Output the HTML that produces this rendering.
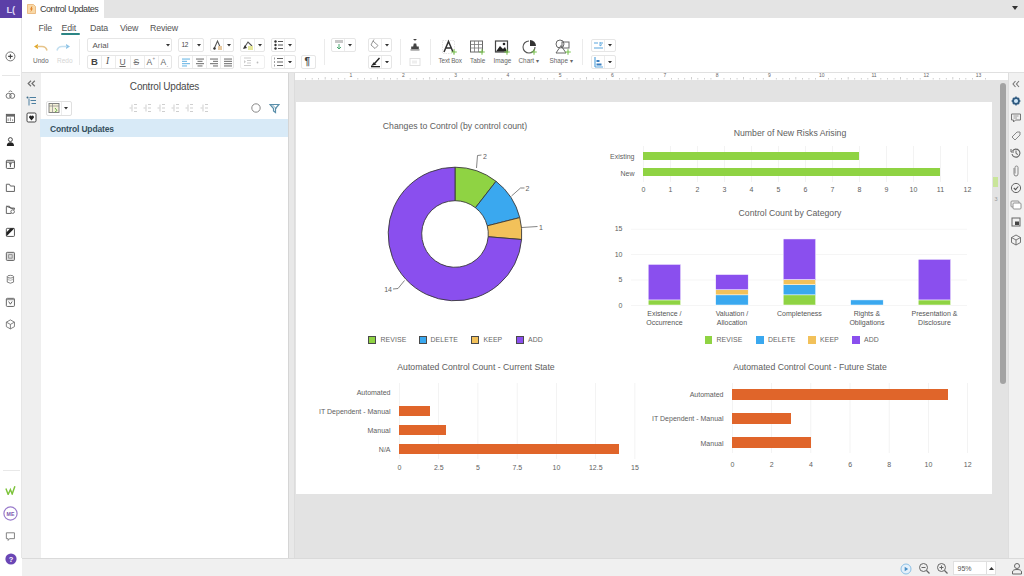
<!DOCTYPE html>
<html><head><meta charset="utf-8">
<style>
*{box-sizing:border-box;margin:0;padding:0}
html,body{width:1024px;height:576px;overflow:hidden;background:#fff;font-family:"Liberation Sans",sans-serif;color:#333}
.a{position:absolute}
.t{position:absolute;white-space:nowrap;line-height:1}
</style></head><body>
<div class="a" style="left:22px;top:0px;width:1002px;height:18px;background:#e4e4e4"></div>
<div class="a" style="left:22px;top:0px;width:82px;height:18px;background:#fff"></div>
<div class="a" style="left:0px;top:0px;width:22px;height:18px;background:#5b3fa7"></div>
<div class="t" style="left:6.5px;top:4.5px;font-size:9.5px;color:#ddd6f5;font-weight:bold;letter-spacing:-0.3px">L(</div>
<svg class="a" style="left:27px;top:4px;" width="9" height="10" viewBox="0 0 9 10"><path d="M0.5 0.5h6l2 2v7h-8z" fill="#f8d9a8" stroke="#e9b070" stroke-width="0.8"/><path d="M4.5 2.5l-1.5 3h1.2l-.8 3 2.5-4h-1.3l.9-2z" fill="#e07a20"/></svg>
<div class="t" style="left:40px;top:4.50px;font-size:9px;line-height:9px;color:#3a3a3a;letter-spacing:-0.45px">Control Updates</div>
<svg class="a" style="left:1012px;top:6px;" width="6" height="4" viewBox="0 0 6 4"><path d="M0 0H6L3 4Z" fill="#333"/></svg>
<div class="a" style="left:21px;top:18px;width:1px;height:540px;background:#e6e6e6"></div>
<div class="t" style="left:38.5px;top:23.90px;font-size:8.8px;line-height:8.8px;color:#555;letter-spacing:-0.15px">File</div>
<div class="t" style="left:61.5px;top:23.90px;font-size:8.8px;line-height:8.8px;color:#555;letter-spacing:-0.15px">Edit</div>
<div class="t" style="left:90px;top:23.90px;font-size:8.8px;line-height:8.8px;color:#555;letter-spacing:-0.15px">Data</div>
<div class="t" style="left:120px;top:23.90px;font-size:8.8px;line-height:8.8px;color:#555;letter-spacing:-0.15px">View</div>
<div class="t" style="left:150px;top:23.90px;font-size:8.8px;line-height:8.8px;color:#555;letter-spacing:-0.15px">Review</div>
<div class="a" style="left:61px;top:33px;width:19px;height:2px;background:#2b8585;border-radius:1px"></div>
<div class="a" style="left:22px;top:72px;width:1002px;height:1px;background:#e0e0e0"></div>
<svg class="a" style="left:33px;top:42px;" width="16" height="10" viewBox="0 0 16 10"><path d="M5 2 L1 4.5 L5 7 Z" fill="#e2a92a"/><path d="M4 4.5 H9 Q13 4.5 14 8.5" stroke="#e7c48a" stroke-width="1.6" fill="none"/></svg>
<svg class="a" style="left:56px;top:42px;" width="15" height="10" viewBox="0 0 15 10"><path d="M10 2 L14 4.5 L10 7 Z" fill="#8ec3e6"/><path d="M11 4.5 H6 Q2 4.5 1 8.5" stroke="#c3dff0" stroke-width="1.6" fill="none"/></svg>
<div class="t" style="left:33px;top:58.05px;font-size:6.5px;line-height:6.5px;color:#666;">Undo</div>
<div class="t" style="left:57px;top:58.05px;font-size:6.5px;line-height:6.5px;color:#d5d5d5;">Redo</div>
<div class="a" style="left:79px;top:39px;width:1px;height:26px;background:#ebebeb"></div>
<div class="a" style="left:87px;top:38px;width:85px;height:14px;border:1px solid #e6e6e6;border-radius:2px;background:#fff"></div>
<div class="t" style="left:92.5px;top:41.50px;font-size:8px;line-height:8px;color:#555;">Arial</div>
<svg class="a" style="left:165.5px;top:44.3px;" width="4" height="2.5" viewBox="0 0 4 2.5"><path d="M0 0H4L2 2.5Z" fill="#333"/></svg>
<div class="a" style="left:87px;top:54.5px;width:85px;height:14.5px;border:1px solid #e6e6e6;border-radius:2px;background:#fff"></div>
<div class="a" style="left:101.2px;top:55.5px;width:1px;height:12.5px;background:#ececec"></div>
<div class="a" style="left:115.4px;top:55.5px;width:1px;height:12.5px;background:#ececec"></div>
<div class="a" style="left:129.6px;top:55.5px;width:1px;height:12.5px;background:#ececec"></div>
<div class="a" style="left:143.8px;top:55.5px;width:1px;height:12.5px;background:#ececec"></div>
<div class="a" style="left:158.0px;top:55.5px;width:1px;height:12.5px;background:#ececec"></div>
<div class="t" style="left:91px;top:57.25px;font-size:9.5px;line-height:9.5px;color:#444;font-weight:bold">B</div>
<div class="t" style="left:106px;top:57.25px;font-size:9.5px;line-height:9.5px;color:#555;font-style:italic;font-family:'Liberation Serif',serif">I</div>
<div class="t" style="left:119.5px;top:57.75px;font-size:8.5px;line-height:8.5px;color:#666;text-decoration:underline">U</div>
<div class="t" style="left:133.5px;top:57.75px;font-size:8.5px;line-height:8.5px;color:#777;text-decoration:line-through">S</div>
<div class="t" style="left:146.5px;top:57.75px;font-size:8.5px;line-height:8.5px;color:#666;">A</div>
<div class="t" style="left:152.5px;top:56.75px;font-size:4.5px;line-height:4.5px;color:#888;">+</div>
<div class="t" style="left:160.5px;top:57.75px;font-size:8.5px;line-height:8.5px;color:#666;">A</div>
<div class="t" style="left:166.5px;top:62.00px;font-size:6px;line-height:6px;color:#444;">.</div>
<div class="a" style="left:178px;top:38px;width:26px;height:14px;border:1px solid #e6e6e6;border-radius:2px;background:#fff"></div>
<div class="a" style="left:192px;top:39px;width:1px;height:12px;background:#ececec"></div>
<div class="t" style="left:181.5px;top:42.25px;font-size:6.5px;line-height:6.5px;color:#444;letter-spacing:-0.3px">12</div>
<svg class="a" style="left:196.5px;top:44.3px;" width="4" height="2.5" viewBox="0 0 4 2.5"><path d="M0 0H4L2 2.5Z" fill="#333"/></svg>
<div class="a" style="left:210px;top:38px;width:24px;height:14px;border:1px solid #e6e6e6;border-radius:2px;background:#fff"></div>
<div class="a" style="left:223px;top:39px;width:1px;height:12px;background:#ececec"></div>
<svg class="a" style="left:212px;top:39px;" width="11" height="12" viewBox="0 0 11 12"><path d="M2 10 L5.5 2 L9 10" stroke="#555" stroke-width="1.1" fill="none"/><rect x="6" y="7" width="4" height="4" fill="#e8c9a0"/><circle cx="2.5" cy="9.5" r="1.2" fill="#333"/></svg>
<svg class="a" style="left:226.5px;top:44.3px;" width="4" height="2.5" viewBox="0 0 4 2.5"><path d="M0 0H4L2 2.5Z" fill="#333"/></svg>
<div class="a" style="left:240px;top:38px;width:25px;height:14px;border:1px solid #e6e6e6;border-radius:2px;background:#fff"></div>
<div class="a" style="left:254px;top:39px;width:1px;height:12px;background:#ececec"></div>
<svg class="a" style="left:242px;top:39px;" width="12" height="12" viewBox="0 0 12 12"><path d="M2 9 L6 3 L10 7" stroke="#555" stroke-width="1.1" fill="none"/><path d="M1 10 L3 6 L5 9 Z" fill="#333"/><rect x="6" y="7" width="5" height="4" fill="#e6e89a"/></svg>
<svg class="a" style="left:257.5px;top:44.3px;" width="4" height="2.5" viewBox="0 0 4 2.5"><path d="M0 0H4L2 2.5Z" fill="#333"/></svg>
<div class="a" style="left:271px;top:38px;width:25px;height:14px;border:1px solid #e6e6e6;border-radius:2px;background:#fff"></div>
<div class="a" style="left:284px;top:39px;width:1px;height:12px;background:#ececec"></div>
<svg class="a" style="left:274px;top:40px;" width="10" height="10" viewBox="0 0 10 10"><circle cx="1.5" cy="1.5" r="1.2" fill="#333"/><circle cx="1.5" cy="5" r="1.2" fill="#333"/><circle cx="1.5" cy="8.5" r="1.2" fill="#333"/><path d="M4 1.5H9M4 5H9M4 8.5H9" stroke="#555" stroke-width="1"/></svg>
<svg class="a" style="left:288px;top:44.3px;" width="4" height="2.5" viewBox="0 0 4 2.5"><path d="M0 0H4L2 2.5Z" fill="#333"/></svg>
<div class="a" style="left:178px;top:55px;width:56px;height:14px;border:1px solid #e6e6e6;border-radius:2px;background:#fff"></div>
<div class="a" style="left:192px;top:56px;width:1px;height:12px;background:#ececec"></div>
<div class="a" style="left:206px;top:56px;width:1px;height:12px;background:#ececec"></div>
<div class="a" style="left:220px;top:56px;width:1px;height:12px;background:#ececec"></div>
<svg class="a" style="left:181px;top:58px;" width="10" height="10" viewBox="0 0 10 10"><rect x="1" y="0.5" width="8" height="1.1" fill="#6fb9e6"/><rect x="1" y="2.8" width="5" height="1.1" fill="#6fb9e6"/><rect x="1" y="5.1" width="8" height="1.1" fill="#6fb9e6"/><rect x="1" y="7.3999999999999995" width="5" height="1.1" fill="#6fb9e6"/></svg>
<svg class="a" style="left:195px;top:58px;" width="10" height="10" viewBox="0 0 10 10"><rect x="1.0" y="0.5" width="8" height="1.1" fill="#777"/><rect x="2.5" y="2.8" width="5" height="1.1" fill="#777"/><rect x="1.0" y="5.1" width="8" height="1.1" fill="#777"/><rect x="2.5" y="7.3999999999999995" width="5" height="1.1" fill="#777"/></svg>
<svg class="a" style="left:209px;top:58px;" width="10" height="10" viewBox="0 0 10 10"><rect x="1" y="0.5" width="8" height="1.1" fill="#777"/><rect x="4" y="2.8" width="5" height="1.1" fill="#777"/><rect x="1" y="5.1" width="8" height="1.1" fill="#777"/><rect x="4" y="7.3999999999999995" width="5" height="1.1" fill="#777"/></svg>
<svg class="a" style="left:223px;top:58px;" width="10" height="10" viewBox="0 0 10 10"><rect x="1" y="0.5" width="8" height="1.1" fill="#777"/><rect x="1" y="2.8" width="8" height="1.1" fill="#777"/><rect x="1" y="5.1" width="8" height="1.1" fill="#777"/><rect x="1" y="7.3999999999999995" width="8" height="1.1" fill="#777"/></svg>
<div class="a" style="left:240px;top:55px;width:25px;height:14px;border:1px solid #efefef;border-radius:2px"></div>
<svg class="a" style="left:243px;top:57px;" width="10" height="10" viewBox="0 0 10 10"><path d="M1 1H8M4 3.5H8M4 6H8M1 8.5H8" stroke="#ccc" stroke-width="1"/><path d="M1 3L3 4.7L1 6.5Z" fill="#ccc"/></svg>
<svg class="a" style="left:255px;top:60px;" width="5" height="5" viewBox="0 0 5 5"><circle cx="2.5" cy="2.5" r="0.9" fill="#bbb"/></svg>
<div class="a" style="left:271px;top:55px;width:25px;height:14px;border:1px solid #e6e6e6;border-radius:2px;background:#fff"></div>
<div class="a" style="left:284px;top:56px;width:1px;height:12px;background:#ececec"></div>
<svg class="a" style="left:274px;top:57px;" width="10" height="10" viewBox="0 0 10 10"><path d="M3 1.5H9M3 5H9M3 8.5H9" stroke="#666" stroke-width="1"/><path d="M0.5 0.5v2M0.5 4v2M0.5 7.5v2" stroke="#888" stroke-width="0.8"/></svg>
<svg class="a" style="left:288px;top:60.8px;" width="4" height="2.5" viewBox="0 0 4 2.5"><path d="M0 0H4L2 2.5Z" fill="#333"/></svg>
<div class="a" style="left:301px;top:55px;width:15px;height:14px;border:1px solid #e6e6e6;border-radius:2px;background:#fff"></div>
<div class="t" style="left:304.5px;top:57.00px;font-size:10px;line-height:10px;color:#444;font-weight:bold">&para;</div>
<div class="a" style="left:324px;top:39px;width:1px;height:26px;background:#ebebeb"></div>
<div class="a" style="left:331px;top:38px;width:25px;height:14px;border:1px solid #e6e6e6;border-radius:2px;background:#fff"></div>
<div class="a" style="left:344px;top:39px;width:1px;height:12px;background:#ececec"></div>
<svg class="a" style="left:334px;top:39px;" width="10" height="12" viewBox="0 0 10 12"><rect x="1" y="1" width="8" height="3" fill="#c8c8c8"/><path d="M5 5V10M3 8L5 10L7 8" stroke="#4aa870" stroke-width="1" fill="none"/></svg>
<svg class="a" style="left:348px;top:44.3px;" width="4" height="2.5" viewBox="0 0 4 2.5"><path d="M0 0H4L2 2.5Z" fill="#333"/></svg>
<div class="a" style="left:368px;top:38px;width:24px;height:14px;border:1px solid #e6e6e6;border-radius:2px;background:#fff"></div>
<div class="a" style="left:381px;top:39px;width:1px;height:12px;background:#ececec"></div>
<svg class="a" style="left:370px;top:39px;" width="11" height="12" viewBox="0 0 11 12"><path d="M3 2L8 6.5L5 9.5L1 6Z" stroke="#888" stroke-width="0.9" fill="none"/><path d="M3 2L4 0.5" stroke="#888" stroke-width="0.9"/></svg>
<svg class="a" style="left:384.5px;top:44.3px;" width="4" height="2.5" viewBox="0 0 4 2.5"><path d="M0 0H4L2 2.5Z" fill="#333"/></svg>
<div class="a" style="left:368px;top:55px;width:24px;height:14px;border:1px solid #e6e6e6;border-radius:2px;background:#fff"></div>
<div class="a" style="left:381px;top:56px;width:1px;height:12px;background:#ececec"></div>
<svg class="a" style="left:370px;top:56px;" width="11" height="12" viewBox="0 0 11 12"><path d="M1 10L4 6L6.5 8.5Z" fill="#222"/><path d="M5 7L9.5 2" stroke="#222" stroke-width="1.4"/><rect x="1" y="10" width="9" height="1.3" fill="#222"/></svg>
<svg class="a" style="left:384.5px;top:60.8px;" width="4" height="2.5" viewBox="0 0 4 2.5"><path d="M0 0H4L2 2.5Z" fill="#333"/></svg>
<div class="a" style="left:400px;top:39px;width:1px;height:26px;background:#ebebeb"></div>
<svg class="a" style="left:409px;top:39px;" width="12" height="12" viewBox="0 0 12 12"><path d="M6 1.5a1.6 1.6 0 1 1 0.01 0M4.8 4.5h2.4l.6 3h2v2.5h-7.6v-2.5h2z" fill="#444"/><rect x="1.5" y="10.3" width="9" height="1.2" fill="#777"/></svg>
<svg class="a" style="left:409px;top:57px;" width="12" height="10" viewBox="0 0 12 10"><rect x="1" y="1.5" width="10" height="7" fill="none" stroke="#ddd" stroke-width="0.9"/><rect x="3" y="3.5" width="5" height="3" fill="#eee"/></svg>
<div class="a" style="left:430px;top:39px;width:1px;height:26px;background:#ebebeb"></div>
<svg class="a" style="left:441px;top:39px;" width="17" height="16" viewBox="0 0 17 16"><rect x="1.5" y="1.5" width="12" height="13" fill="none" stroke="#ddd" stroke-width="0.8" stroke-dasharray="1.5 1"/><path d="M3 13L7.5 2.5L12 13M5 9H10" stroke="#333" stroke-width="1.5" fill="none"/><path d="M10.2 13H15.8M13 10.2V15.8" stroke="#79c24f" stroke-width="1.1"/></svg>
<div class="t" style="left:438.5px;top:57.60px;font-size:6.4px;line-height:6.4px;color:#666;letter-spacing:-0.15px">Text Box</div>
<svg class="a" style="left:469px;top:39px;" width="17" height="16" viewBox="0 0 17 16"><rect x="1.5" y="2" width="12" height="11" fill="none" stroke="#666" stroke-width="1"/><path d="M1.5 5.5H13.5M1.5 9H13.5M5.5 2V13M9.5 2V13" stroke="#777" stroke-width="0.8"/><path d="M10.2 13H15.8M13 10.2V15.8" stroke="#79c24f" stroke-width="1.1"/></svg>
<div class="t" style="left:470px;top:57.60px;font-size:6.4px;line-height:6.4px;color:#666;">Table</div>
<svg class="a" style="left:494px;top:39px;" width="17" height="16" viewBox="0 0 17 16"><rect x="1.5" y="2" width="12" height="11" fill="#fff" stroke="#444" stroke-width="1.2"/><path d="M2 12.5L6 7L9 10L11 8L13 12.5Z" fill="#222"/><circle cx="10" cy="5" r="1.3" fill="#222"/><path d="M10.2 13H15.8M13 10.2V15.8" stroke="#79c24f" stroke-width="1.1"/></svg>
<div class="t" style="left:493.5px;top:57.60px;font-size:6.4px;line-height:6.4px;color:#666;">Image</div>
<svg class="a" style="left:521px;top:39px;" width="17" height="16" viewBox="0 0 17 16"><path d="M8 2A6 6 0 1 0 14 8" stroke="#555" stroke-width="1.1" fill="none"/><path d="M9 1V7H15A6 6 0 0 0 9 1Z" fill="#333"/><path d="M10.2 13H15.8M13 10.2V15.8" stroke="#79c24f" stroke-width="1.1"/></svg>
<div class="t" style="left:518.5px;top:57.60px;font-size:6.4px;line-height:6.4px;color:#666;">Chart &#9662;</div>
<svg class="a" style="left:554px;top:39px;" width="18" height="16" viewBox="0 0 18 16"><circle cx="6" cy="5" r="4" fill="none" stroke="#666" stroke-width="1"/><path d="M2 14L7 6.5L12 14Z" fill="none" stroke="#666" stroke-width="1"/><rect x="8" y="3" width="7" height="6" fill="none" stroke="#666" stroke-width="1"/><path d="M11.2 13H16.8M14 10.2V15.8" stroke="#79c24f" stroke-width="1.1"/></svg>
<div class="t" style="left:549.5px;top:57.60px;font-size:6.4px;line-height:6.4px;color:#666;">Shape &#9662;</div>
<div class="a" style="left:582px;top:39px;width:1px;height:26px;background:#ebebeb"></div>
<div class="a" style="left:591px;top:39px;width:25px;height:13px;border:1px solid #e6e6e6;border-radius:2px;background:#fff"></div>
<div class="a" style="left:604px;top:40px;width:1px;height:11px;background:#ececec"></div>
<svg class="a" style="left:593px;top:40px;" width="11" height="11" viewBox="0 0 11 11"><path d="M1 3H5M7 3H10M1 8H10" stroke="#5aa6dd" stroke-width="1.1"/><path d="M7 2V6L9 4.5" stroke="#5aa6dd" stroke-width="0.9" fill="none"/></svg>
<svg class="a" style="left:608px;top:44.3px;" width="4" height="2.5" viewBox="0 0 4 2.5"><path d="M0 0H4L2 2.5Z" fill="#333"/></svg>
<div class="a" style="left:591px;top:55px;width:25px;height:14px;border:1px solid #e6e6e6;border-radius:2px;background:#fff"></div>
<div class="a" style="left:604px;top:56px;width:1px;height:12px;background:#ececec"></div>
<svg class="a" style="left:593px;top:56px;" width="11" height="12" viewBox="0 0 11 12"><path d="M2 1V11M2 11H10" stroke="#5aa6dd" stroke-width="1.2"/><rect x="3.5" y="4" width="3" height="2" fill="#3b7fc0"/><rect x="3.5" y="7.5" width="5" height="2" fill="#3b7fc0"/></svg>
<svg class="a" style="left:608px;top:60.8px;" width="4" height="2.5" viewBox="0 0 4 2.5"><path d="M0 0H4L2 2.5Z" fill="#333"/></svg>
<div class="a" style="left:22px;top:73px;width:19px;height:485px;background:#efefef"></div>
<div class="a" style="left:41px;top:73px;width:247px;height:485px;background:#fff"></div>
<div class="t" style="left:-35.5px;top:81.50px;width:400px;text-align:center;font-size:10px;line-height:10px;color:#4a4a4a;letter-spacing:-0.2px">Control Updates</div>
<div class="a" style="left:40px;top:119px;width:248px;height:18px;background:#d8eaf7"></div>
<div class="t" style="left:50px;top:124.95px;font-size:8.5px;line-height:8.5px;color:#35505e;font-weight:bold;letter-spacing:-0.15px">Control Updates</div>
<div class="a" style="left:288px;top:73px;width:7px;height:485px;background:#e8e8e8;border-left:1px solid #d5d5d5;border-right:1px solid #dcdcdc"></div>
<div class="a" style="left:295px;top:73px;width:697px;height:7px;background:#fff"></div>
<div class="a" style="left:295px;top:80px;width:713px;height:478px;background:#e3e3e3"></div>
<div class="a" style="left:296px;top:101.5px;width:695.5px;height:392px;background:#fff"></div>
<svg class="a" style="left:0px;top:0px;left:0;top:0" width="1024" height="576" viewBox="0 0 1024 576"><path d="M455.00 167.20A66.8 66.8 0 0 1 496.03 181.29L475.45 207.72A33.3 33.3 0 0 0 455.00 200.70Z" fill="#8fd343" stroke="#3a3a3a" stroke-width="0.9"/><path d="M496.03 181.29A66.8 66.8 0 0 1 519.76 217.60L487.28 225.83A33.3 33.3 0 0 0 475.45 207.72Z" fill="#3aa8ef" stroke="#3a3a3a" stroke-width="0.9"/><path d="M519.76 217.60A66.8 66.8 0 0 1 521.57 239.52L488.19 236.75A33.3 33.3 0 0 0 487.28 225.83Z" fill="#f2c15a" stroke="#3a3a3a" stroke-width="0.9"/><path d="M521.57 239.52A66.8 66.8 0 1 1 455.00 167.20L455.00 200.70A33.3 33.3 0 1 0 488.19 236.75Z" fill="#8a4fee" stroke="#3a3a3a" stroke-width="0.9"/></svg>
<svg class="a" style="left:0px;top:0px;left:0;top:0" width="1024" height="576" viewBox="0 0 1024 576"><path d="M476.5 168 L477.5 155.5 L481.5 155" stroke="#666" stroke-width="0.8" fill="none"/><path d="M511.5 196 L520.5 188 L524.5 188" stroke="#666" stroke-width="0.8" fill="none"/><path d="M522 227.5 L537.5 226.5" stroke="#666" stroke-width="0.8" fill="none"/><path d="M404.5 280.5 L398 288.5 L393 289" stroke="#666" stroke-width="0.8" fill="none"/></svg>
<div class="t" style="left:483px;top:152.50px;font-size:7px;line-height:7px;color:#5e5e5e;">2</div>
<div class="t" style="left:525.5px;top:185.00px;font-size:7px;line-height:7px;color:#5e5e5e;">2</div>
<div class="t" style="left:539px;top:223.70px;font-size:7px;line-height:7px;color:#5e5e5e;">1</div>
<div class="t" style="left:92px;top:286.30px;width:300px;text-align:right;font-size:7px;line-height:7px;color:#5e5e5e;">14</div>
<div class="t" style="left:255px;top:121.65px;width:400px;text-align:center;font-size:8.7px;line-height:8.7px;color:#5e5e5e;">Changes to Control (by control count)</div>
<div class="a" style="left:368px;top:336px;width:8px;height:8px;background:#8fd343;border:1px solid #4a4a4a;"></div>
<div class="t" style="left:380.5px;top:336.55px;font-size:6.9px;line-height:6.9px;color:#666;letter-spacing:0.1px">REVISE</div>
<div class="a" style="left:418.5px;top:336px;width:8px;height:8px;background:#3aa8ef;border:1px solid #4a4a4a;"></div>
<div class="t" style="left:430.5px;top:336.55px;font-size:6.9px;line-height:6.9px;color:#666;letter-spacing:0.1px">DELETE</div>
<div class="a" style="left:471px;top:336px;width:8px;height:8px;background:#f2c15a;border:1px solid #4a4a4a;"></div>
<div class="t" style="left:483.5px;top:336.55px;font-size:6.9px;line-height:6.9px;color:#666;letter-spacing:0.1px">KEEP</div>
<div class="a" style="left:515.5px;top:336px;width:8px;height:8px;background:#8a4fee;border:1px solid #4a4a4a;"></div>
<div class="t" style="left:528px;top:336.55px;font-size:6.9px;line-height:6.9px;color:#666;letter-spacing:0.1px">ADD</div>
<div class="t" style="left:590px;top:129.15px;width:400px;text-align:center;font-size:8.7px;line-height:8.7px;color:#5e5e5e;">Number of New Risks Arising</div>
<svg class="a" style="left:0px;top:0px;left:0;top:0" width="1024" height="576" viewBox="0 0 1024 576"><rect x="643" y="146" width="0.8" height="36" fill="#f0f0f0"/><rect x="670" y="146" width="0.8" height="36" fill="#f0f0f0"/><rect x="697" y="146" width="0.8" height="36" fill="#f0f0f0"/><rect x="724" y="146" width="0.8" height="36" fill="#f0f0f0"/><rect x="751" y="146" width="0.8" height="36" fill="#f0f0f0"/><rect x="778" y="146" width="0.8" height="36" fill="#f0f0f0"/><rect x="805" y="146" width="0.8" height="36" fill="#f0f0f0"/><rect x="832" y="146" width="0.8" height="36" fill="#f0f0f0"/><rect x="859" y="146" width="0.8" height="36" fill="#f0f0f0"/><rect x="886" y="146" width="0.8" height="36" fill="#f0f0f0"/><rect x="913" y="146" width="0.8" height="36" fill="#f0f0f0"/><rect x="940" y="146" width="0.8" height="36" fill="#f0f0f0"/><rect x="967" y="146" width="0.8" height="36" fill="#f0f0f0"/></svg>
<div class="a" style="left:643px;top:152px;width:216px;height:8px;background:#8fd343"></div>
<div class="a" style="left:643px;top:168px;width:297px;height:8px;background:#8fd343"></div>
<div class="t" style="left:334.5px;top:153.30px;width:300px;text-align:right;font-size:7px;line-height:7px;color:#5e5e5e;">Existing</div>
<div class="t" style="left:334.5px;top:169.80px;width:300px;text-align:right;font-size:7px;line-height:7px;color:#5e5e5e;">New</div>
<div class="t" style="left:443.5px;top:185.50px;width:400px;text-align:center;font-size:7px;line-height:7px;color:#5e5e5e;">0</div>
<div class="t" style="left:470.5px;top:185.50px;width:400px;text-align:center;font-size:7px;line-height:7px;color:#5e5e5e;">1</div>
<div class="t" style="left:497.5px;top:185.50px;width:400px;text-align:center;font-size:7px;line-height:7px;color:#5e5e5e;">2</div>
<div class="t" style="left:524.5px;top:185.50px;width:400px;text-align:center;font-size:7px;line-height:7px;color:#5e5e5e;">3</div>
<div class="t" style="left:551.5px;top:185.50px;width:400px;text-align:center;font-size:7px;line-height:7px;color:#5e5e5e;">4</div>
<div class="t" style="left:578.5px;top:185.50px;width:400px;text-align:center;font-size:7px;line-height:7px;color:#5e5e5e;">5</div>
<div class="t" style="left:605.5px;top:185.50px;width:400px;text-align:center;font-size:7px;line-height:7px;color:#5e5e5e;">6</div>
<div class="t" style="left:632.5px;top:185.50px;width:400px;text-align:center;font-size:7px;line-height:7px;color:#5e5e5e;">7</div>
<div class="t" style="left:659.5px;top:185.50px;width:400px;text-align:center;font-size:7px;line-height:7px;color:#5e5e5e;">8</div>
<div class="t" style="left:686.5px;top:185.50px;width:400px;text-align:center;font-size:7px;line-height:7px;color:#5e5e5e;">9</div>
<div class="t" style="left:713.5px;top:185.50px;width:400px;text-align:center;font-size:7px;line-height:7px;color:#5e5e5e;">10</div>
<div class="t" style="left:740.5px;top:185.50px;width:400px;text-align:center;font-size:7px;line-height:7px;color:#5e5e5e;">11</div>
<div class="t" style="left:767.5px;top:185.50px;width:400px;text-align:center;font-size:7px;line-height:7px;color:#5e5e5e;">12</div>
<div class="t" style="left:590px;top:208.65px;width:400px;text-align:center;font-size:8.7px;line-height:8.7px;color:#5e5e5e;">Control Count by Category</div>
<svg class="a" style="left:0px;top:0px;left:0;top:0" width="1024" height="576" viewBox="0 0 1024 576"><rect x="631" y="305.0" width="336" height="0.8" fill="#f3f3f3"/><rect x="631" y="279.6" width="336" height="0.8" fill="#f3f3f3"/><rect x="631" y="254.2" width="336" height="0.8" fill="#f3f3f3"/><rect x="631" y="228.8" width="336" height="0.8" fill="#f3f3f3"/></svg>
<div class="t" style="left:322.5px;top:301.50px;width:300px;text-align:right;font-size:7px;line-height:7px;color:#5e5e5e;">0</div>
<div class="t" style="left:322.5px;top:276.10px;width:300px;text-align:right;font-size:7px;line-height:7px;color:#5e5e5e;">5</div>
<div class="t" style="left:322.5px;top:250.70px;width:300px;text-align:right;font-size:7px;line-height:7px;color:#5e5e5e;">10</div>
<div class="t" style="left:322.5px;top:225.30px;width:300px;text-align:right;font-size:7px;line-height:7px;color:#5e5e5e;">15</div>
<div class="t" style="left:604.45px;top:308.7px;width:120px;text-align:center;font-size:7px;line-height:9.2px;color:#555">Existence /<br>Occurrence</div>
<div class="t" style="left:671.95px;top:308.7px;width:120px;text-align:center;font-size:7px;line-height:9.2px;color:#555">Valuation /<br>Allocation</div>
<div class="t" style="left:739.45px;top:308.7px;width:120px;text-align:center;font-size:7px;line-height:9.2px;color:#555">Completeness</div>
<div class="t" style="left:806.95px;top:308.7px;width:120px;text-align:center;font-size:7px;line-height:9.2px;color:#555">Rights &amp;<br>Obligations</div>
<div class="t" style="left:874.45px;top:308.7px;width:120px;text-align:center;font-size:7px;line-height:9.2px;color:#555">Presentation &amp;<br>Disclosure</div>
<svg class="a" style="left:0px;top:0px;left:0;top:0" width="1024" height="576" viewBox="0 0 1024 576"><rect x="648.2" y="299.92" width="32.5" height="5.08" fill="#8fd343" stroke="#fff" stroke-width="0.5"/><rect x="648.2" y="264.36" width="32.5" height="35.56" fill="#8a4fee" stroke="#fff" stroke-width="0.5"/><rect x="715.7" y="294.84" width="32.5" height="10.16" fill="#3aa8ef" stroke="#fff" stroke-width="0.5"/><rect x="715.7" y="289.76" width="32.5" height="5.08" fill="#f2c15a" stroke="#fff" stroke-width="0.5"/><rect x="715.7" y="274.52" width="32.5" height="15.24" fill="#8a4fee" stroke="#fff" stroke-width="0.5"/><rect x="783.2" y="294.84" width="32.5" height="10.16" fill="#8fd343" stroke="#fff" stroke-width="0.5"/><rect x="783.2" y="284.68" width="32.5" height="10.16" fill="#3aa8ef" stroke="#fff" stroke-width="0.5"/><rect x="783.2" y="279.60" width="32.5" height="5.08" fill="#f2c15a" stroke="#fff" stroke-width="0.5"/><rect x="783.2" y="238.96" width="32.5" height="40.64" fill="#8a4fee" stroke="#fff" stroke-width="0.5"/><rect x="850.7" y="299.92" width="32.5" height="5.08" fill="#3aa8ef" stroke="#fff" stroke-width="0.5"/><rect x="918.2" y="299.92" width="32.5" height="5.08" fill="#8fd343" stroke="#fff" stroke-width="0.5"/><rect x="918.2" y="259.28" width="32.5" height="40.64" fill="#8a4fee" stroke="#fff" stroke-width="0.5"/></svg>
<div class="a" style="left:704.5px;top:336px;width:7.5px;height:7.5px;background:#8fd343"></div>
<div class="t" style="left:716.5px;top:336.55px;font-size:6.9px;line-height:6.9px;color:#666;letter-spacing:0.1px">REVISE</div>
<div class="a" style="left:756px;top:336px;width:7.5px;height:7.5px;background:#3aa8ef"></div>
<div class="t" style="left:768px;top:336.55px;font-size:6.9px;line-height:6.9px;color:#666;letter-spacing:0.1px">DELETE</div>
<div class="a" style="left:808px;top:336px;width:7.5px;height:7.5px;background:#f2c15a"></div>
<div class="t" style="left:820px;top:336.55px;font-size:6.9px;line-height:6.9px;color:#666;letter-spacing:0.1px">KEEP</div>
<div class="a" style="left:852px;top:336px;width:7.5px;height:7.5px;background:#8a4fee"></div>
<div class="t" style="left:864px;top:336.55px;font-size:6.9px;line-height:6.9px;color:#666;letter-spacing:0.1px">ADD</div>
<div class="t" style="left:276px;top:362.65px;width:400px;text-align:center;font-size:8.7px;line-height:8.7px;color:#5e5e5e;">Automated Control Count - Current State</div>
<svg class="a" style="left:0px;top:0px;left:0;top:0" width="1024" height="576" viewBox="0 0 1024 576"><rect x="399.0" y="383" width="0.8" height="76" fill="#f0f0f0"/><rect x="438.2" y="383" width="0.8" height="76" fill="#f0f0f0"/><rect x="477.5" y="383" width="0.8" height="76" fill="#f0f0f0"/><rect x="516.8" y="383" width="0.8" height="76" fill="#f0f0f0"/><rect x="556.0" y="383" width="0.8" height="76" fill="#f0f0f0"/><rect x="595.2" y="383" width="0.8" height="76" fill="#f0f0f0"/><rect x="634.5" y="383" width="0.8" height="76" fill="#f0f0f0"/></svg>
<div class="t" style="left:90.5px;top:388.50px;width:300px;text-align:right;font-size:7px;line-height:7px;color:#5e5e5e;">Automated</div>
<div class="t" style="left:90.5px;top:407.50px;width:300px;text-align:right;font-size:7px;line-height:7px;color:#5e5e5e;">IT Dependent - Manual</div>
<div class="t" style="left:90.5px;top:427.00px;width:300px;text-align:right;font-size:7px;line-height:7px;color:#5e5e5e;">Manual</div>
<div class="t" style="left:90.5px;top:446.00px;width:300px;text-align:right;font-size:7px;line-height:7px;color:#5e5e5e;">N/A</div>
<div class="a" style="left:399px;top:406px;width:31px;height:9.5px;background:#e0652a"></div>
<div class="a" style="left:399px;top:425.2px;width:47px;height:9.5px;background:#e0652a"></div>
<div class="a" style="left:399px;top:444.4px;width:220px;height:9.5px;background:#e0652a"></div>
<div class="t" style="left:199.5px;top:464.00px;width:400px;text-align:center;font-size:7px;line-height:7px;color:#5e5e5e;">0</div>
<div class="t" style="left:238.75px;top:464.00px;width:400px;text-align:center;font-size:7px;line-height:7px;color:#5e5e5e;">2.5</div>
<div class="t" style="left:278.0px;top:464.00px;width:400px;text-align:center;font-size:7px;line-height:7px;color:#5e5e5e;">5</div>
<div class="t" style="left:317.25px;top:464.00px;width:400px;text-align:center;font-size:7px;line-height:7px;color:#5e5e5e;">7.5</div>
<div class="t" style="left:356.5px;top:464.00px;width:400px;text-align:center;font-size:7px;line-height:7px;color:#5e5e5e;">10</div>
<div class="t" style="left:395.75px;top:464.00px;width:400px;text-align:center;font-size:7px;line-height:7px;color:#5e5e5e;">12.5</div>
<div class="t" style="left:435.0px;top:464.00px;width:400px;text-align:center;font-size:7px;line-height:7px;color:#5e5e5e;">15</div>
<div class="t" style="left:610px;top:362.65px;width:400px;text-align:center;font-size:8.7px;line-height:8.7px;color:#5e5e5e;">Automated Control Count - Future State</div>
<svg class="a" style="left:0px;top:0px;left:0;top:0" width="1024" height="576" viewBox="0 0 1024 576"><rect x="732.0" y="383" width="0.8" height="70" fill="#f0f0f0"/><rect x="771.2" y="383" width="0.8" height="70" fill="#f0f0f0"/><rect x="810.4" y="383" width="0.8" height="70" fill="#f0f0f0"/><rect x="849.6" y="383" width="0.8" height="70" fill="#f0f0f0"/><rect x="888.8" y="383" width="0.8" height="70" fill="#f0f0f0"/><rect x="928.0" y="383" width="0.8" height="70" fill="#f0f0f0"/><rect x="967.2" y="383" width="0.8" height="70" fill="#f0f0f0"/></svg>
<div class="t" style="left:423.5px;top:390.50px;width:300px;text-align:right;font-size:7px;line-height:7px;color:#5e5e5e;">Automated</div>
<div class="t" style="left:423.5px;top:415.00px;width:300px;text-align:right;font-size:7px;line-height:7px;color:#5e5e5e;">IT Dependent - Manual</div>
<div class="t" style="left:423.5px;top:439.50px;width:300px;text-align:right;font-size:7px;line-height:7px;color:#5e5e5e;">Manual</div>
<div class="a" style="left:732px;top:388.5px;width:216px;height:11.3px;background:#e0652a"></div>
<div class="a" style="left:732px;top:413px;width:59px;height:11.3px;background:#e0652a"></div>
<div class="a" style="left:732px;top:437.2px;width:78.5px;height:11.3px;background:#e0652a"></div>
<div class="t" style="left:532.5px;top:461.00px;width:400px;text-align:center;font-size:7px;line-height:7px;color:#5e5e5e;">0</div>
<div class="t" style="left:571.7px;top:461.00px;width:400px;text-align:center;font-size:7px;line-height:7px;color:#5e5e5e;">2</div>
<div class="t" style="left:610.9px;top:461.00px;width:400px;text-align:center;font-size:7px;line-height:7px;color:#5e5e5e;">4</div>
<div class="t" style="left:650.1px;top:461.00px;width:400px;text-align:center;font-size:7px;line-height:7px;color:#5e5e5e;">6</div>
<div class="t" style="left:689.3px;top:461.00px;width:400px;text-align:center;font-size:7px;line-height:7px;color:#5e5e5e;">8</div>
<div class="t" style="left:728.5px;top:461.00px;width:400px;text-align:center;font-size:7px;line-height:7px;color:#5e5e5e;">10</div>
<div class="t" style="left:767.7px;top:461.00px;width:400px;text-align:center;font-size:7px;line-height:7px;color:#5e5e5e;">12</div>
<div class="a" style="left:993px;top:177px;width:5px;height:10px;background:#c9e59a"></div>
<div class="t" style="left:994.5px;top:196.75px;font-size:5.5px;line-height:5.5px;color:#999;">3</div>
<div class="a" style="left:999.5px;top:83px;width:6.5px;height:301px;background:#a3a3a3;border-radius:3.5px"></div>
<div class="a" style="left:1008px;top:73px;width:1px;height:485px;background:#dedede"></div>
<div class="a" style="left:1009px;top:73px;width:15px;height:485px;background:#f1f1f1"></div>
<div class="a" style="left:22px;top:558px;width:1002px;height:18px;background:#f0f0f0;border-top:1px solid #dadada"></div>
<div class="a" style="left:953px;top:561px;width:43px;height:14px;background:#fff;border:1px solid #e0e0e0"></div>
<div class="a" style="left:986px;top:562px;width:1px;height:12px;background:#e0e0e0"></div>
<div class="t" style="left:957.5px;top:565.00px;font-size:7px;line-height:7px;color:#555;">95%</div>
<svg class="a" style="left:988.5px;top:567px;" width="5" height="3" viewBox="0 0 5 3"><path d="M0 3H5L2.5 0Z" fill="#333"/></svg>
<svg class="a" style="left:5.10px;top:51.10px" width="10.80" height="10.80" viewBox="0 0 12 12"><circle cx="6" cy="6" r="5" fill="none" stroke="#666" stroke-width="1"/><path d="M3.5 6H8.5M6 3.5V8.5" stroke="#444" stroke-width="1.2"/></svg>
<div class="a" style="left:2px;top:75px;width:18px;height:1px;background:#e6e6e6"></div>
<svg class="a" style="left:5.10px;top:90.10px" width="10.80" height="10.80" viewBox="0 0 12 12"><circle cx="4" cy="6.5" r="2.8" fill="none" stroke="#666" stroke-width="1"/><circle cx="8" cy="6.5" r="2.8" fill="none" stroke="#666" stroke-width="1"/><path d="M4 2L6 1L8 2" stroke="#666" fill="none" stroke-width="0.9"/></svg>
<svg class="a" style="left:5.10px;top:112.60px" width="10.80" height="10.80" viewBox="0 0 12 12"><rect x="1.5" y="1.5" width="9" height="9" fill="none" stroke="#555" stroke-width="1"/><rect x="1.5" y="1.5" width="9" height="2.5" fill="#666"/><path d="M3.5 6v3M6 5v4M8.5 7v2" stroke="#777" stroke-width="0.9"/></svg>
<svg class="a" style="left:5.10px;top:135.60px" width="10.80" height="10.80" viewBox="0 0 12 12"><circle cx="6" cy="4" r="2.2" fill="none" stroke="#333" stroke-width="1"/><path d="M2 11Q2 7 6 7Q10 7 10 11Z" fill="#222"/></svg>
<svg class="a" style="left:5.10px;top:158.60px" width="10.80" height="10.80" viewBox="0 0 12 12"><rect x="1.5" y="1.5" width="9" height="9" rx="1" fill="none" stroke="#444" stroke-width="1"/><path d="M1.5 3.5H10.5M6 5V9M4.5 5.2H7.5" stroke="#444" stroke-width="1"/></svg>
<svg class="a" style="left:5.10px;top:181.60px" width="10.80" height="10.80" viewBox="0 0 12 12"><path d="M1.5 3V10.5H10.5V4.5H6L5 2.5H1.5Z" fill="none" stroke="#555" stroke-width="1"/></svg>
<svg class="a" style="left:5.10px;top:204.10px" width="10.80" height="10.80" viewBox="0 0 12 12"><path d="M1.5 3V10.5H7M10.5 6V4.5H6L5 2.5H1.5Z" fill="none" stroke="#555" stroke-width="1"/><circle cx="8.5" cy="8.5" r="2" fill="none" stroke="#555" stroke-width="0.9"/></svg>
<svg class="a" style="left:5.10px;top:227.10px" width="10.80" height="10.80" viewBox="0 0 12 12"><rect x="1.5" y="1.5" width="9" height="9" rx="1" fill="none" stroke="#444" stroke-width="1"/><path d="M1.5 10.5V6L6 1.5H10.5Z" fill="#222"/></svg>
<svg class="a" style="left:5.10px;top:250.60px" width="10.80" height="10.80" viewBox="0 0 12 12"><rect x="1.5" y="1.5" width="9" height="9" rx="1" fill="#ddd" stroke="#555" stroke-width="1"/><path d="M4 4H8V8H4Z" fill="none" stroke="#777" stroke-width="0.8"/></svg>
<svg class="a" style="left:5.10px;top:273.60px" width="10.80" height="10.80" viewBox="0 0 12 12"><ellipse cx="6" cy="3" rx="3.5" ry="1.5" fill="none" stroke="#666" stroke-width="0.9"/><path d="M2.5 3V9Q6 11.5 9.5 9V3" fill="none" stroke="#666" stroke-width="0.9"/><path d="M2.5 6Q6 8 9.5 6" fill="none" stroke="#888" stroke-width="0.7"/></svg>
<svg class="a" style="left:5.10px;top:296.60px" width="10.80" height="10.80" viewBox="0 0 12 12"><rect x="1.5" y="1.5" width="9" height="9" rx="1" fill="none" stroke="#555" stroke-width="1"/><path d="M4 5L6 8L8 5" fill="none" stroke="#555" stroke-width="1"/><path d="M1.5 3H10.5" stroke="#555" stroke-width="0.8"/></svg>
<svg class="a" style="left:5.10px;top:319.10px" width="10.80" height="10.80" viewBox="0 0 12 12"><path d="M6 1L10.5 3.5V8.5L6 11L1.5 8.5V3.5Z M1.5 3.5L6 6L10.5 3.5M6 6V11" fill="none" stroke="#666" stroke-width="0.9"/></svg>
<div class="a" style="left:3px;top:470px;width:17px;height:1px;background:#e8e8e8"></div>
<svg class="a" style="left:5.10px;top:484.60px" width="10.80" height="10.80" viewBox="0 0 12 12"><path d="M1 4L3.5 10.5L6 5L8 10L11 1.5" fill="none" stroke="#7cc33a" stroke-width="1.6"/></svg>
<svg class="a" style="left:3px;top:506px;" width="15" height="15" viewBox="0 0 15 15"><circle cx="7.5" cy="7.5" r="6.6" fill="#fff" stroke="#9a7ccc" stroke-width="1.2"/><text x="7.5" y="9.5" font-size="5.2" text-anchor="middle" fill="#7a5ab0" font-family="Liberation Sans" font-weight="bold">ME</text></svg>
<svg class="a" style="left:5.10px;top:530.60px" width="10.80" height="10.80" viewBox="0 0 12 12"><path d="M1.5 2H10.5V8.5H5L3.5 10.5V8.5H1.5Z" fill="none" stroke="#777" stroke-width="1"/></svg>
<svg class="a" style="left:4.5px;top:552.5px;" width="12" height="12" viewBox="0 0 12 12"><circle cx="6" cy="6" r="5.6" fill="#6a46b5"/><text x="6" y="8.6" font-size="7.5" text-anchor="middle" fill="#fff" font-family="Liberation Sans" font-weight="bold">?</text></svg>
<svg class="a" style="left:27px;top:80px;" width="9" height="7" viewBox="0 0 9 7"><path d="M4 0.8L1.2 3.5L4 6.2M7.8 0.8L5 3.5L7.8 6.2" fill="none" stroke="#707070" stroke-width="1.2"/></svg>
<svg class="a" style="left:26px;top:96px;" width="11" height="11" viewBox="0 0 11 11"><circle cx="1.5" cy="1.5" r="1" fill="#3f6d8a"/><path d="M3.5 1.5H10M4.5 4.5H10M5.5 7.5H10M3 2.5V9.5" stroke="#4d7fa0" stroke-width="1"/></svg>
<svg class="a" style="left:26px;top:112px;" width="11" height="11" viewBox="0 0 11 11"><rect x="1" y="1" width="9" height="9" rx="1.2" fill="#fff" stroke="#444" stroke-width="1"/><path d="M3 5.5Q3 3.5 4.5 3.5Q5.5 3.5 5.5 4.5Q5.5 3.5 6.5 3.5Q8 3.5 8 5.5L5.5 8.5Z" fill="#222"/></svg>
<div class="a" style="left:46px;top:100.5px;width:26px;height:15px;border:1px solid #e0e0e0;border-radius:2px;background:#fff"></div>
<div class="a" style="left:61px;top:101.5px;width:1px;height:13px;background:#ececec"></div>
<svg class="a" style="left:48px;top:102px;" width="12" height="12" viewBox="0 0 12 12"><rect x="1" y="1.5" width="10" height="9" fill="#f4f0d8" stroke="#777" stroke-width="0.9"/><path d="M1 4H11M4.5 1.5V10.5" stroke="#888" stroke-width="0.7"/><path d="M7 6L9 8.5L7 10" stroke="#6ab04a" stroke-width="1" fill="none"/></svg>
<svg class="a" style="left:64px;top:107.3px;" width="4" height="2.5" viewBox="0 0 4 2.5"><path d="M0 0H4L2 2.5Z" fill="#333"/></svg>
<svg class="a" style="left:129px;top:103px;" width="10" height="10" viewBox="0 0 10 10"><path d="M3 1.5V8.5M5 1.5H8M5 5H8M5 8.5H8M0.5 5H2.5" stroke="#cfcfcf" stroke-width="1"/></svg>
<svg class="a" style="left:142.5px;top:103px;" width="10" height="10" viewBox="0 0 10 10"><path d="M3 1.5V8.5M5 1.5H8M5 5H8M5 8.5H8M0.5 5H2.5" stroke="#cfcfcf" stroke-width="1"/></svg>
<svg class="a" style="left:157px;top:103px;" width="10" height="10" viewBox="0 0 10 10"><path d="M3 1.5V8.5M5 1.5H8M5 5H8M5 8.5H8M0.5 5H2.5" stroke="#cfcfcf" stroke-width="1"/></svg>
<svg class="a" style="left:170.5px;top:103px;" width="10" height="10" viewBox="0 0 10 10"><path d="M3 1.5V8.5M5 1.5H8M5 5H8M5 8.5H8M0.5 5H2.5" stroke="#cfcfcf" stroke-width="1"/></svg>
<svg class="a" style="left:185px;top:103px;" width="10" height="10" viewBox="0 0 10 10"><path d="M3 1.5V8.5M5 1.5H8M5 5H8M5 8.5H8M0.5 5H2.5" stroke="#cfcfcf" stroke-width="1"/></svg>
<svg class="a" style="left:199.5px;top:103px;" width="10" height="10" viewBox="0 0 10 10"><path d="M3 1.5V8.5M5 1.5H8M5 5H8M5 8.5H8M0.5 5H2.5" stroke="#cfcfcf" stroke-width="1"/></svg>
<svg class="a" style="left:251px;top:103px;" width="10" height="10" viewBox="0 0 10 10"><circle cx="5" cy="5" r="4.2" fill="none" stroke="#888" stroke-width="1"/></svg>
<svg class="a" style="left:269px;top:102.5px;" width="11" height="11" viewBox="0 0 11 11"><path d="M1 1.5H10L6.5 5.5V9.5L4.5 8V5.5Z" fill="none" stroke="#5a8faa" stroke-width="1.2"/><path d="M3 1.5L7.5 6" stroke="#5a8faa" stroke-width="0.8"/></svg>
<svg class="a" style="left:0px;top:0px;left:0;top:0" width="1024" height="576" viewBox="0 0 1024 576"><rect x="305.2" y="78.0" width="0.7" height="1.5" fill="#bbb"/><rect x="311.8" y="78.0" width="0.7" height="1.5" fill="#bbb"/><rect x="318.3" y="78.0" width="0.7" height="1.5" fill="#bbb"/><rect x="324.8" y="77.0" width="0.7" height="2.5" fill="#bbb"/><rect x="331.4" y="78.0" width="0.7" height="1.5" fill="#bbb"/><rect x="337.9" y="78.0" width="0.7" height="1.5" fill="#bbb"/><rect x="344.5" y="78.0" width="0.7" height="1.5" fill="#bbb"/><rect x="357.5" y="78.0" width="0.7" height="1.5" fill="#bbb"/><rect x="364.1" y="78.0" width="0.7" height="1.5" fill="#bbb"/><rect x="370.6" y="78.0" width="0.7" height="1.5" fill="#bbb"/><rect x="377.1" y="77.0" width="0.7" height="2.5" fill="#bbb"/><rect x="383.7" y="78.0" width="0.7" height="1.5" fill="#bbb"/><rect x="390.2" y="78.0" width="0.7" height="1.5" fill="#bbb"/><rect x="396.8" y="78.0" width="0.7" height="1.5" fill="#bbb"/><rect x="409.8" y="78.0" width="0.7" height="1.5" fill="#bbb"/><rect x="416.4" y="78.0" width="0.7" height="1.5" fill="#bbb"/><rect x="422.9" y="78.0" width="0.7" height="1.5" fill="#bbb"/><rect x="429.4" y="77.0" width="0.7" height="2.5" fill="#bbb"/><rect x="436.0" y="78.0" width="0.7" height="1.5" fill="#bbb"/><rect x="442.5" y="78.0" width="0.7" height="1.5" fill="#bbb"/><rect x="449.1" y="78.0" width="0.7" height="1.5" fill="#bbb"/><rect x="462.1" y="78.0" width="0.7" height="1.5" fill="#bbb"/><rect x="468.7" y="78.0" width="0.7" height="1.5" fill="#bbb"/><rect x="475.2" y="78.0" width="0.7" height="1.5" fill="#bbb"/><rect x="481.8" y="77.0" width="0.7" height="2.5" fill="#bbb"/><rect x="488.3" y="78.0" width="0.7" height="1.5" fill="#bbb"/><rect x="494.8" y="78.0" width="0.7" height="1.5" fill="#bbb"/><rect x="501.4" y="78.0" width="0.7" height="1.5" fill="#bbb"/><rect x="514.4" y="78.0" width="0.7" height="1.5" fill="#bbb"/><rect x="521.0" y="78.0" width="0.7" height="1.5" fill="#bbb"/><rect x="527.5" y="78.0" width="0.7" height="1.5" fill="#bbb"/><rect x="534.0" y="77.0" width="0.7" height="2.5" fill="#bbb"/><rect x="540.6" y="78.0" width="0.7" height="1.5" fill="#bbb"/><rect x="547.1" y="78.0" width="0.7" height="1.5" fill="#bbb"/><rect x="553.7" y="78.0" width="0.7" height="1.5" fill="#bbb"/><rect x="566.7" y="78.0" width="0.7" height="1.5" fill="#bbb"/><rect x="573.3" y="78.0" width="0.7" height="1.5" fill="#bbb"/><rect x="579.8" y="78.0" width="0.7" height="1.5" fill="#bbb"/><rect x="586.3" y="77.0" width="0.7" height="2.5" fill="#bbb"/><rect x="592.9" y="78.0" width="0.7" height="1.5" fill="#bbb"/><rect x="599.4" y="78.0" width="0.7" height="1.5" fill="#bbb"/><rect x="606.0" y="78.0" width="0.7" height="1.5" fill="#bbb"/><rect x="619.0" y="78.0" width="0.7" height="1.5" fill="#bbb"/><rect x="625.6" y="78.0" width="0.7" height="1.5" fill="#bbb"/><rect x="632.1" y="78.0" width="0.7" height="1.5" fill="#bbb"/><rect x="638.6" y="77.0" width="0.7" height="2.5" fill="#bbb"/><rect x="645.2" y="78.0" width="0.7" height="1.5" fill="#bbb"/><rect x="651.7" y="78.0" width="0.7" height="1.5" fill="#bbb"/><rect x="658.3" y="78.0" width="0.7" height="1.5" fill="#bbb"/><rect x="671.3" y="78.0" width="0.7" height="1.5" fill="#bbb"/><rect x="677.9" y="78.0" width="0.7" height="1.5" fill="#bbb"/><rect x="684.4" y="78.0" width="0.7" height="1.5" fill="#bbb"/><rect x="691.0" y="77.0" width="0.7" height="2.5" fill="#bbb"/><rect x="697.5" y="78.0" width="0.7" height="1.5" fill="#bbb"/><rect x="704.0" y="78.0" width="0.7" height="1.5" fill="#bbb"/><rect x="710.6" y="78.0" width="0.7" height="1.5" fill="#bbb"/><rect x="723.6" y="78.0" width="0.7" height="1.5" fill="#bbb"/><rect x="730.2" y="78.0" width="0.7" height="1.5" fill="#bbb"/><rect x="736.7" y="78.0" width="0.7" height="1.5" fill="#bbb"/><rect x="743.2" y="77.0" width="0.7" height="2.5" fill="#bbb"/><rect x="749.8" y="78.0" width="0.7" height="1.5" fill="#bbb"/><rect x="756.3" y="78.0" width="0.7" height="1.5" fill="#bbb"/><rect x="762.9" y="78.0" width="0.7" height="1.5" fill="#bbb"/><rect x="775.9" y="78.0" width="0.7" height="1.5" fill="#bbb"/><rect x="782.5" y="78.0" width="0.7" height="1.5" fill="#bbb"/><rect x="789.0" y="78.0" width="0.7" height="1.5" fill="#bbb"/><rect x="795.5" y="77.0" width="0.7" height="2.5" fill="#bbb"/><rect x="802.1" y="78.0" width="0.7" height="1.5" fill="#bbb"/><rect x="808.6" y="78.0" width="0.7" height="1.5" fill="#bbb"/><rect x="815.2" y="78.0" width="0.7" height="1.5" fill="#bbb"/><rect x="828.2" y="78.0" width="0.7" height="1.5" fill="#bbb"/><rect x="834.8" y="78.0" width="0.7" height="1.5" fill="#bbb"/><rect x="841.3" y="78.0" width="0.7" height="1.5" fill="#bbb"/><rect x="847.8" y="77.0" width="0.7" height="2.5" fill="#bbb"/><rect x="854.4" y="78.0" width="0.7" height="1.5" fill="#bbb"/><rect x="860.9" y="78.0" width="0.7" height="1.5" fill="#bbb"/><rect x="867.5" y="78.0" width="0.7" height="1.5" fill="#bbb"/><rect x="880.5" y="78.0" width="0.7" height="1.5" fill="#bbb"/><rect x="887.1" y="78.0" width="0.7" height="1.5" fill="#bbb"/><rect x="893.6" y="78.0" width="0.7" height="1.5" fill="#bbb"/><rect x="900.1" y="77.0" width="0.7" height="2.5" fill="#bbb"/><rect x="906.7" y="78.0" width="0.7" height="1.5" fill="#bbb"/><rect x="913.2" y="78.0" width="0.7" height="1.5" fill="#bbb"/><rect x="919.8" y="78.0" width="0.7" height="1.5" fill="#bbb"/><rect x="932.8" y="78.0" width="0.7" height="1.5" fill="#bbb"/><rect x="939.4" y="78.0" width="0.7" height="1.5" fill="#bbb"/><rect x="945.9" y="78.0" width="0.7" height="1.5" fill="#bbb"/><rect x="952.5" y="77.0" width="0.7" height="2.5" fill="#bbb"/><rect x="959.0" y="78.0" width="0.7" height="1.5" fill="#bbb"/><rect x="965.5" y="78.0" width="0.7" height="1.5" fill="#bbb"/><rect x="972.1" y="78.0" width="0.7" height="1.5" fill="#bbb"/><rect x="985.1" y="78.0" width="0.7" height="1.5" fill="#bbb"/></svg>
<div class="t" style="left:151.0px;top:73.30px;width:400px;text-align:center;font-size:5px;line-height:5px;color:#666;">1</div>
<div class="t" style="left:203.29999999999995px;top:73.30px;width:400px;text-align:center;font-size:5px;line-height:5px;color:#666;">2</div>
<div class="t" style="left:255.59999999999997px;top:73.30px;width:400px;text-align:center;font-size:5px;line-height:5px;color:#666;">3</div>
<div class="t" style="left:307.9px;top:73.30px;width:400px;text-align:center;font-size:5px;line-height:5px;color:#666;">4</div>
<div class="t" style="left:360.20000000000005px;top:73.30px;width:400px;text-align:center;font-size:5px;line-height:5px;color:#666;">5</div>
<div class="t" style="left:412.5px;top:73.30px;width:400px;text-align:center;font-size:5px;line-height:5px;color:#666;">6</div>
<div class="t" style="left:464.79999999999995px;top:73.30px;width:400px;text-align:center;font-size:5px;line-height:5px;color:#666;">7</div>
<div class="t" style="left:517.0999999999999px;top:73.30px;width:400px;text-align:center;font-size:5px;line-height:5px;color:#666;">8</div>
<div class="t" style="left:569.4px;top:73.30px;width:400px;text-align:center;font-size:5px;line-height:5px;color:#666;">9</div>
<div class="t" style="left:621.7px;top:73.30px;width:400px;text-align:center;font-size:5px;line-height:5px;color:#666;">10</div>
<div class="t" style="left:674.0px;top:73.30px;width:400px;text-align:center;font-size:5px;line-height:5px;color:#666;">11</div>
<div class="t" style="left:726.3px;top:73.30px;width:400px;text-align:center;font-size:5px;line-height:5px;color:#666;">12</div>
<div class="t" style="left:778.5999999999999px;top:73.30px;width:400px;text-align:center;font-size:5px;line-height:5px;color:#666;">13</div>
<svg class="a" style="left:1010px;top:77.5px;" width="12" height="12" viewBox="0 0 12 12"><path d="M5.5 3L3 6L5.5 9M9 3L6.5 6L9 9" fill="none" stroke="#777" stroke-width="1.1"/></svg>
<svg class="a" style="left:1010px;top:95px;" width="12" height="12" viewBox="0 0 12 12"><circle cx="6" cy="6" r="2.9" fill="#cfe6f7" stroke="#2f5a80" stroke-width="1.7"/><path d="M6 1.6V3M6 9V10.4M1.6 6H3M9 6H10.4M2.9 2.9L3.8 3.8M8.2 8.2L9.1 9.1M2.9 9.1L3.8 8.2M8.2 3.8L9.1 2.9" stroke="#2f5a80" stroke-width="1.3"/></svg>
<svg class="a" style="left:1010px;top:112px;" width="12" height="12" viewBox="0 0 12 12"><path d="M1.5 2H10.5V8H5.5L3.5 10V8H1.5Z" fill="none" stroke="#777" stroke-width="1"/><path d="M3.5 4H8.5M3.5 6H7" stroke="#888" stroke-width="0.8"/></svg>
<svg class="a" style="left:1010px;top:129.5px;" width="12" height="12" viewBox="0 0 12 12"><path d="M2 7L7 2H10V5L5 10Z" fill="none" stroke="#888" stroke-width="1"/></svg>
<svg class="a" style="left:1010px;top:147px;" width="12" height="12" viewBox="0 0 12 12"><path d="M2.5 4A4 4 0 1 1 2 7" fill="none" stroke="#666" stroke-width="1.1"/><path d="M1 2V5H4" fill="none" stroke="#666" stroke-width="1"/><path d="M6 3.5V6.5L8 7.5" stroke="#666" stroke-width="1" fill="none"/></svg>
<svg class="a" style="left:1010px;top:164.5px;" width="12" height="12" viewBox="0 0 12 12"><path d="M4 3V9Q4 11 6 11Q8 11 8 9V2.5Q8 1 6.5 1Q5 1 5 2.5V8.5" fill="none" stroke="#888" stroke-width="1"/></svg>
<svg class="a" style="left:1010px;top:181.5px;" width="12" height="12" viewBox="0 0 12 12"><circle cx="6" cy="6" r="4.6" fill="none" stroke="#666" stroke-width="1"/><path d="M3.8 6L5.5 7.6L8.3 4.5" fill="none" stroke="#555" stroke-width="1.1"/></svg>
<svg class="a" style="left:1010px;top:199px;" width="12" height="12" viewBox="0 0 12 12"><rect x="1" y="2" width="8" height="6" rx="1" fill="none" stroke="#888" stroke-width="0.9"/><rect x="3" y="4" width="8" height="6" rx="1" fill="#fff" stroke="#888" stroke-width="0.9"/></svg>
<svg class="a" style="left:1010px;top:216px;" width="12" height="12" viewBox="0 0 12 12"><rect x="2" y="2" width="8" height="8" fill="none" stroke="#666" stroke-width="1"/><rect x="5" y="5.5" width="4" height="3.5" fill="#444"/></svg>
<svg class="a" style="left:1010px;top:233.5px;" width="12" height="12" viewBox="0 0 12 12"><path d="M6 1L10.5 3.5V8.5L6 11L1.5 8.5V3.5Z M1.5 3.5L6 6L10.5 3.5M6 6V11" fill="none" stroke="#666" stroke-width="0.9"/></svg>
<svg class="a" style="left:900px;top:563px;" width="12" height="12" viewBox="0 0 12 12"><circle cx="6" cy="6" r="5" fill="#e4f0fa" stroke="#8cc0e6" stroke-width="1"/><path d="M4.7 3.8V8.2L8.2 6Z" fill="#4a90c8"/></svg>
<svg class="a" style="left:918px;top:562px;" width="13" height="13" viewBox="0 0 13 13"><circle cx="5.5" cy="5.5" r="4" fill="none" stroke="#666" stroke-width="1"/><path d="M8.5 8.5L11.5 11.5" stroke="#666" stroke-width="1.3"/><path d="M3.5 5.5H7.5" stroke="#666" stroke-width="1"/></svg>
<svg class="a" style="left:936px;top:562px;" width="13" height="13" viewBox="0 0 13 13"><circle cx="5.5" cy="5.5" r="4" fill="none" stroke="#666" stroke-width="1"/><path d="M8.5 8.5L11.5 11.5" stroke="#666" stroke-width="1.3"/><path d="M3.5 5.5H7.5M5.5 3.5V7.5" stroke="#666" stroke-width="1"/></svg>
<svg class="a" style="left:1011px;top:562px;" width="12" height="13" viewBox="0 0 12 13"><circle cx="6" cy="4" r="2.5" fill="none" stroke="#666" stroke-width="1"/><path d="M1.5 12V10Q1.5 7.5 6 7.5Q10.5 7.5 10.5 10V12Z" fill="none" stroke="#666" stroke-width="1"/></svg>
</body></html>
